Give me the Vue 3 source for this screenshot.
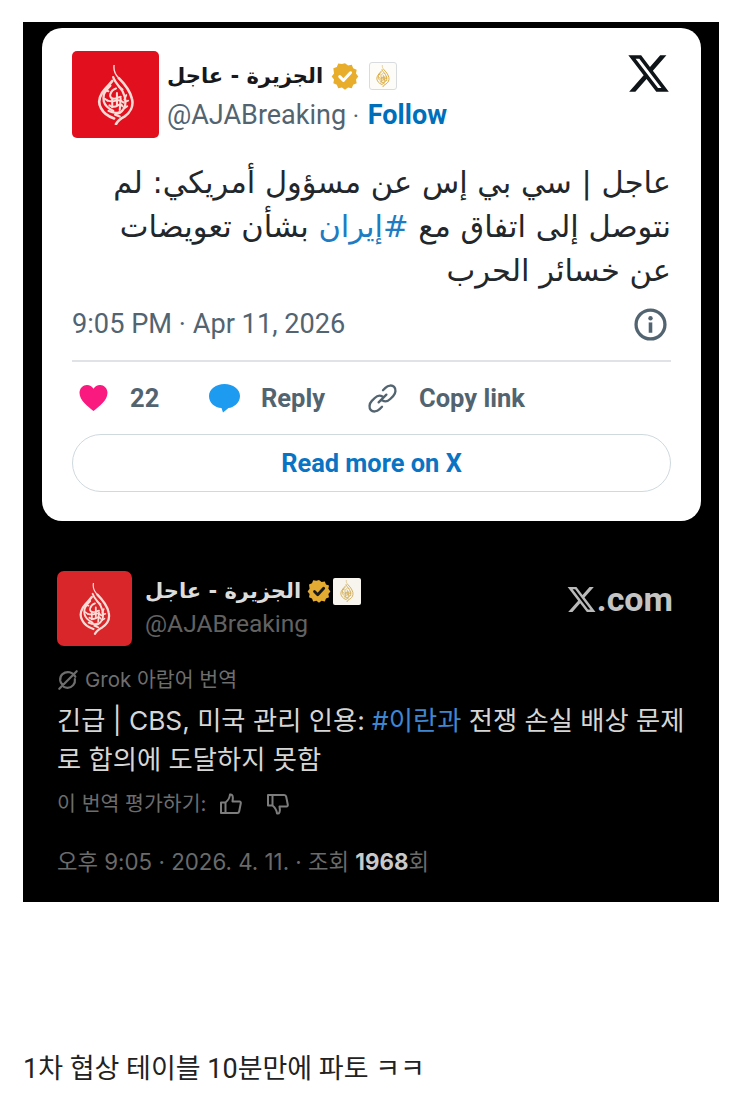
<template>
  <main class="page">
    <section class="shot">
      <article class="card">
        <header class="card__head">
          <div class="avatar">
            <svg class="logo" viewBox="0 0 40 64" aria-hidden="true">
              <use href="#aja-drop" />
            </svg>
          </div>
          <div class="card__who">
            <div class="name">
              <span class="name__text" dir="rtl">الجزيرة - عاجل</span>
              <svg class="badge" viewBox="0 0 24 24" aria-hidden="true">
                <path fill="#e8ad2a" d="M12 1l2.600 2 3.200-.6 1.200 3 3 1.200-.6 3.200 2 2.600-2 2.600.6 3.200-3 1.200-1.200 3-3.200-.6-2.600 2-2.600-2-3.200.6-1.200-3-3-1.200.6-3.200-2-2.600 2-2.600L2 5.400l3-1.200 1.200-3 3.200.6z" />
                <path fill="none" stroke="#fff" stroke-width="2.600" stroke-linecap="round" stroke-linejoin="round" d="M7.500 12.500l3.200 3.200 6-6.500" />
              </svg>
              <span class="affil affil--light">
                <svg class="affil__drop" viewBox="0 0 40 64" aria-hidden="true">
                  <use href="#aja-drop" />
                </svg>
              </span>
            </div>
            <div class="handle">
              @AJABreaking <span class="handle__dot">·</span> <span class="follow">Follow</span>
            </div>
          </div>
          <svg class="xlogo" viewBox="0 0 24 24" aria-hidden="true">
            <path d="M18.244 2.250h3.308l-7.227 8.260 8.502 11.240H16.170l-5.214-6.817L4.990 21.750H1.680l7.730-8.835L1.254 2.250H8.080l4.713 6.231zm-1.161 17.520h1.833L7.084 4.126H5.117z" />
          </svg>
        </header>

        <p class="tweet" dir="rtl">عاجل | سي بي إس عن مسؤول أمريكي: لم<br />نتوصل إلى اتفاق مع <span class="tweet__tag">#إيران</span> بشأن تعويضات<br />عن خسائر الحرب</p>

        <div class="meta">
          <span>9:05 PM · Apr 11, 2026</span>
          <svg class="info" viewBox="0 0 24 24" aria-hidden="true">
            <circle cx="12" cy="12" r="10.500" fill="none" stroke="#536471" stroke-width="2.400" />
            <circle cx="12" cy="7.500" r="1.600" fill="#536471" />
            <rect x="10.700" y="10.500" width="2.600" height="7.500" fill="#536471" />
          </svg>
        </div>

        <div class="actions">
          <div class="action action--likes">
            <svg class="heart" viewBox="0 0 32 30" aria-hidden="true">
              <path fill="#f9197f" d="M16 29C10 24 1 18 1 9.500 1 4.500 4.800 1 9 1c3 0 5.500 1.500 7 4 1.500-2.500 4-4 7-4 4.200 0 8 3.500 8 8.500C31 18 22 24 16 29z" />
            </svg>
            <span>22</span>
          </div>
          <div class="action action--reply">
            <svg class="bubble" viewBox="0 0 32 30" aria-hidden="true">
              <path fill="#1d9bf0" d="M16 1c8.500 0 15.500 5 15.500 12S25 24.500 20 25l-5.500 4.500-1.500-4.500C6 24.500.5 20 .5 13S7.500 1 16 1z" />
            </svg>
            <span>Reply</span>
          </div>
          <div class="action action--copy">
            <svg class="chain" viewBox="0 0 32 32" aria-hidden="true">
              <path fill="none" stroke="#536471" stroke-width="2.400" stroke-linecap="round" d="M16.500 7.500l2.500-2.500c3-3 7-3 9-1s2 6.500-1 9.500l-3 3c-2.500 2.500-5.500 3-8 1.500M15.500 24.500l-2.500 2.500c-3 3-7 3-9 1s-2-6.500 1-9.500l3-3c2.500-2.500 5.500-3 8-1.500M12 20l8-8" />
            </svg>
            <span>Copy link</span>
          </div>
        </div>

        <div class="readmore">Read more on X</div>
      </article>

      <section class="post">
        <header class="post__head">
          <div class="avatar avatar--dark">
            <svg class="logo logo--dark" viewBox="0 0 40 64" aria-hidden="true">
              <use href="#aja-drop" />
            </svg>
          </div>
          <div class="post__who">
            <div class="name name--dark">
              <span class="name__text" dir="rtl">الجزيرة - عاجل</span>
              <svg class="badge badge--dark" viewBox="0 0 24 24" aria-hidden="true">
                <path fill="#e3ab31" d="M12 1l2.600 2 3.200-.6 1.200 3 3 1.200-.6 3.200 2 2.600-2 2.600.6 3.200-3 1.200-1.200 3-3.200-.6-2.600 2-2.600-2-3.200.6-1.200-3-3-1.200.6-3.200-2-2.600 2-2.600L2 5.400l3-1.200 1.200-3 3.200.6z" />
                <path fill="none" stroke="#1a1a1a" stroke-width="2.800" stroke-linecap="round" stroke-linejoin="round" d="M7.500 12.500l3.200 3.200 6-6.500" />
              </svg>
              <span class="affil affil--dark">
                <svg class="affil__drop" viewBox="0 0 40 64" aria-hidden="true">
                  <use href="#aja-drop" />
                </svg>
              </span>
            </div>
            <div class="handle handle--dark">@AJABreaking</div>
          </div>
          <div class="brand">
            <svg class="brand__x" viewBox="0 0 24 24" aria-hidden="true">
              <path d="M18.244 2.250h3.308l-7.227 8.260 8.502 11.240H16.170l-5.214-6.817L4.990 21.750H1.680l7.730-8.835L1.254 2.250H8.080l4.713 6.231zm-1.161 17.520h1.833L7.084 4.126H5.117z" />
            </svg>
            <span>.com</span>
          </div>
        </header>

        <div class="grok">
          <svg class="grok__icon" viewBox="0 0 24 24" aria-hidden="true">
            <path fill="none" stroke="#6e6e6e" stroke-width="2.400" stroke-linecap="round" d="M20 8.500A9 9 0 0 0 6 5.500a8.500 8.500 0 0 0-2.500 7c.3 1.800 1 3 2 4M21.500 2.500L2.500 21.500M19.500 11c.8 5-3 9.500-8 9.500-1.500 0-2.800-.3-4-1" />
          </svg>
          <span>Grok 아랍어 번역</span>
        </div>

        <p class="translated">긴급 | CBS, 미국 관리 인용: <span class="translated__tag">#이란과</span> 전쟁 손실 배상 문제<br />로 합의에 도달하지 못함</p>

        <div class="rate">
          <span>이 번역 평가하기:</span>
          <svg class="thumb" viewBox="0 0 24 24" aria-hidden="true">
            <path fill="none" stroke="#7d7d7d" stroke-width="2" stroke-linejoin="round" d="M2 10.500h4.500V21H2zM6.500 10.500c2-1.500 4-4 4.500-8 2.500-.5 3.500 2 2.500 7h7c1 0 1.500.8 1.300 1.800l-1.600 8c-.2 1-1 1.700-2 1.700H6.500" />
          </svg>
          <svg class="thumb thumb--down" viewBox="0 0 24 24" aria-hidden="true">
            <path fill="none" stroke="#7d7d7d" stroke-width="2" stroke-linejoin="round" d="M2 10.500h4.500V21H2zM6.500 10.500c2-1.500 4-4 4.500-8 2.500-.5 3.500 2 2.500 7h7c1 0 1.500.8 1.300 1.800l-1.600 8c-.2 1-1 1.700-2 1.700H6.500" />
          </svg>
        </div>

        <div class="stamp">오후 9:05 · 2026. 4. 11. · 조회 <b>1968</b>회</div>
      </section>
    </section>

    <p class="caption">1차 협상 테이블 10분만에 파토 ㅋㅋ</p>

    <svg class="defs" width="0" height="0" aria-hidden="true">
      <defs>
        <g id="aja-drop" fill="none" stroke="currentColor" stroke-linecap="round" stroke-linejoin="round">
          <path stroke-width="1.500" d="M18 0c-1 6 1 10 5 14" />
          <path stroke-width="2.800" d="M23 14c5 5 12 13 14 22 2 8-2 15-8 19-4 2-7 4-9 8" />
          <path stroke-width="2.800" d="M16 17c-3 4-8 8-11 13-3 5-4 11-1 16 3 6 8 9 14 11" />
          <path stroke-width="2.400" d="M17 13c2 6 7 10 10 15 3 6 5 13 1 19-2 3-5 5-8 5" />
          <path stroke-width="2.400" d="M14 22c-3 3-6 6-7 10-1 5 0 9 3 12 2 2 4 4 7 5" />
          <path stroke-width="2.200" d="M20 25c-3 1-5 3-6 6-1 3 1 5 4 5 3 0 5-2 7-2M11 38c3 1 6 1 9 0 3-1 6 0 8 2M13 43c3 2 6 2 9 0 2-1 4-1 5 1" />
          <path stroke-width="2.200" d="M21 30v13M16 36v9M25 36l-1 12M12 49c4 2 8 3 12 1M19 53l5 2" />
          <path stroke-width="2" d="M23 23l4 3M8 27l4 1M31 32l-2 5M32 44l-3 2M8 36l3 2M33 38l-3 1" />
        </g>
      </defs>
    </svg>
  </main>
</template>

<script setup>
</script>

<style>
html,
body {
  background: #fff;
}
</style>

<style scoped>
.page {
  width: 743px;
  height: 1099px;
  overflow: hidden;
  background: #fff;
  font-family: Roboto, "Noto Sans CJK KR", sans-serif;
}

.defs {
  display: block;
}

.shot {
  width: 696px;
  height: 880px;
  margin: 22px 0 0 23px;
  padding: 6px 18px 0 19px;
  box-sizing: border-box;
  background: #000;
  float: left;
}

.card {
  height: 493px;
  padding: 23px 30px 0;
  box-sizing: border-box;
  background: #fff;
  border-radius: 20px;
}

.card__head {
  display: flex;
  align-items: flex-start;
}

.avatar {
  flex: none;
  width: 87px;
  height: 87px;
  display: flex;
  align-items: center;
  justify-content: center;
  border-radius: 5px;
  background: #e2101f;
  color: #ffdcd6;
}

.avatar--dark {
  width: 75px;
  height: 75px;
  border-radius: 7px;
  background: #d8262b;
}

.logo {
  width: 38px;
  height: 60px;
}

.logo--dark {
  width: 32px;
  height: 52px;
}

.card__who {
  flex: 1;
  margin-left: 8px;
  padding-top: 8px;
}

.name {
  display: flex;
  align-items: center;
  height: 34px;
}

.name__text {
  font-family: "DejaVu Sans", sans-serif;
  font-size: 21px;
  font-weight: 700;
  color: #16181c;
  white-space: nowrap;
}

.badge {
  width: 28px;
  height: 28px;
  margin-left: 8px;
}

.affil {
  display: flex;
  align-items: center;
  justify-content: center;
}

.affil--light {
  width: 28px;
  height: 28px;
  margin-left: 10px;
  box-sizing: border-box;
  border: 1px solid #d8dcdf;
  border-radius: 3px;
  background: #fdfcf8;
  color: #d9a93c;
}

.affil__drop {
  width: 14px;
  height: 22px;
}

.handle {
  margin-top: 6px;
  font-size: 27px;
  line-height: 32px;
  color: #536471;
  white-space: nowrap;
}

.handle__dot {
  font-size: 24px;
}

.follow {
  margin-left: 2px;
  font-weight: 700;
  color: #006fbb;
  font-size: 27px;
}

.xlogo {
  flex: none;
  width: 45px;
  height: 45px;
  fill: #0f1419;
}

.tweet {
  margin: 23px 0 0;
  font-family: "DejaVu Sans", sans-serif;
  font-size: 30.500px;
  line-height: 44px;
  color: #22272c;
  white-space: nowrap;
}

.tweet__tag {
  color: #1d7cc2;
}

.meta {
  display: flex;
  justify-content: space-between;
  align-items: center;
  margin-top: 14px;
  padding-bottom: 19px;
  border-bottom: 2px solid #dfe3e6;
  font-size: 27.200px;
  line-height: 34px;
  color: #536471;
}

.info {
  width: 33px;
  height: 33px;
  margin-right: 4px;
}

.actions {
  display: flex;
  align-items: center;
  height: 72px;
  font-size: 25.500px;
  font-weight: 700;
  color: #536471;
}

.action {
  display: flex;
  align-items: center;
}

.action--likes {
  width: 130px;
  padding-left: 6px;
  box-sizing: border-box;
}

.heart {
  width: 31px;
  height: 28px;
  margin-right: 21px;
}

.action--reply {
  width: 159px;
  margin-left: 6px;
}

.bubble {
  width: 33px;
  height: 30px;
  margin-right: 20px;
}

.chain {
  width: 31px;
  height: 31px;
  margin-right: 21px;
}

.readmore {
  height: 58px;
  box-sizing: border-box;
  border: 1px solid #cfd9de;
  border-radius: 29px;
  font-size: 25.400px;
  font-weight: 700;
  line-height: 56px;
  text-align: center;
  color: #0a74c4;
}

.post {
  padding: 50px 28px 0 15px;
  font-family: Inter, "Noto Sans CJK KR", sans-serif;
  color: #e7e9ea;
}

.post__head {
  display: flex;
  align-items: flex-start;
}

.post__who {
  flex: 1;
  margin-left: 13px;
}

.name--dark {
  height: 30px;
  margin-top: 5px;
}

.name--dark .name__text {
  color: #dcdcdc;
  font-size: 21px;
}

.badge--dark {
  width: 24px;
  height: 24px;
  margin-left: 6px;
}

.affil--dark {
  width: 28px;
  height: 27px;
  margin-left: 2px;
  background: #f7f5ee;
  border-radius: 2px;
  color: #d3ad55;
}

.handle--dark {
  margin-top: 3px;
  font-family: Roboto, sans-serif;
  font-size: 24.600px;
  line-height: 30px;
  color: #626262;
}

.brand {
  display: flex;
  align-items: center;
  margin-top: 9px;
  font-family: Roboto, sans-serif;
  font-size: 34px;
  font-weight: 700;
  line-height: 38px;
  color: #c4c4c4;
}

.brand__x {
  width: 31px;
  height: 31px;
  fill: #b9b9b9;
}

.grok {
  display: flex;
  align-items: center;
  margin-top: 21px;
  font-size: 20.500px;
  line-height: 26px;
  color: #6e6e6e;
}

.grok__icon {
  width: 22px;
  height: 22px;
  margin-right: 6px;
}

.translated {
  width: 660px;
  margin: 8px 0 0;
  font-size: 26.300px;
  line-height: 39px;
  color: #d6d6d6;
  white-space: nowrap;
}

.translated__tag {
  color: #3f86d0;
}

.rate {
  display: flex;
  align-items: center;
  margin-top: 10px;
  font-size: 20.500px;
  line-height: 30px;
  color: #6d6d6d;
}

.thumb {
  width: 24px;
  height: 24px;
  margin-left: 13px;
}

.thumb--down {
  margin-left: 23px;
  transform: rotate(180deg) scaleX(-1);
}

.stamp {
  margin-top: 28px;
  font-size: 22.300px;
  line-height: 30px;
  color: #6a6a6a;
}

.stamp b {
  color: #c9c9c9;
  font-weight: 700;
}

.caption {
  clear: both;
  margin: 0;
  padding: 150px 0 0 23px;
  font-size: 27px;
  line-height: 34px;
  color: #222;
}
</style>
